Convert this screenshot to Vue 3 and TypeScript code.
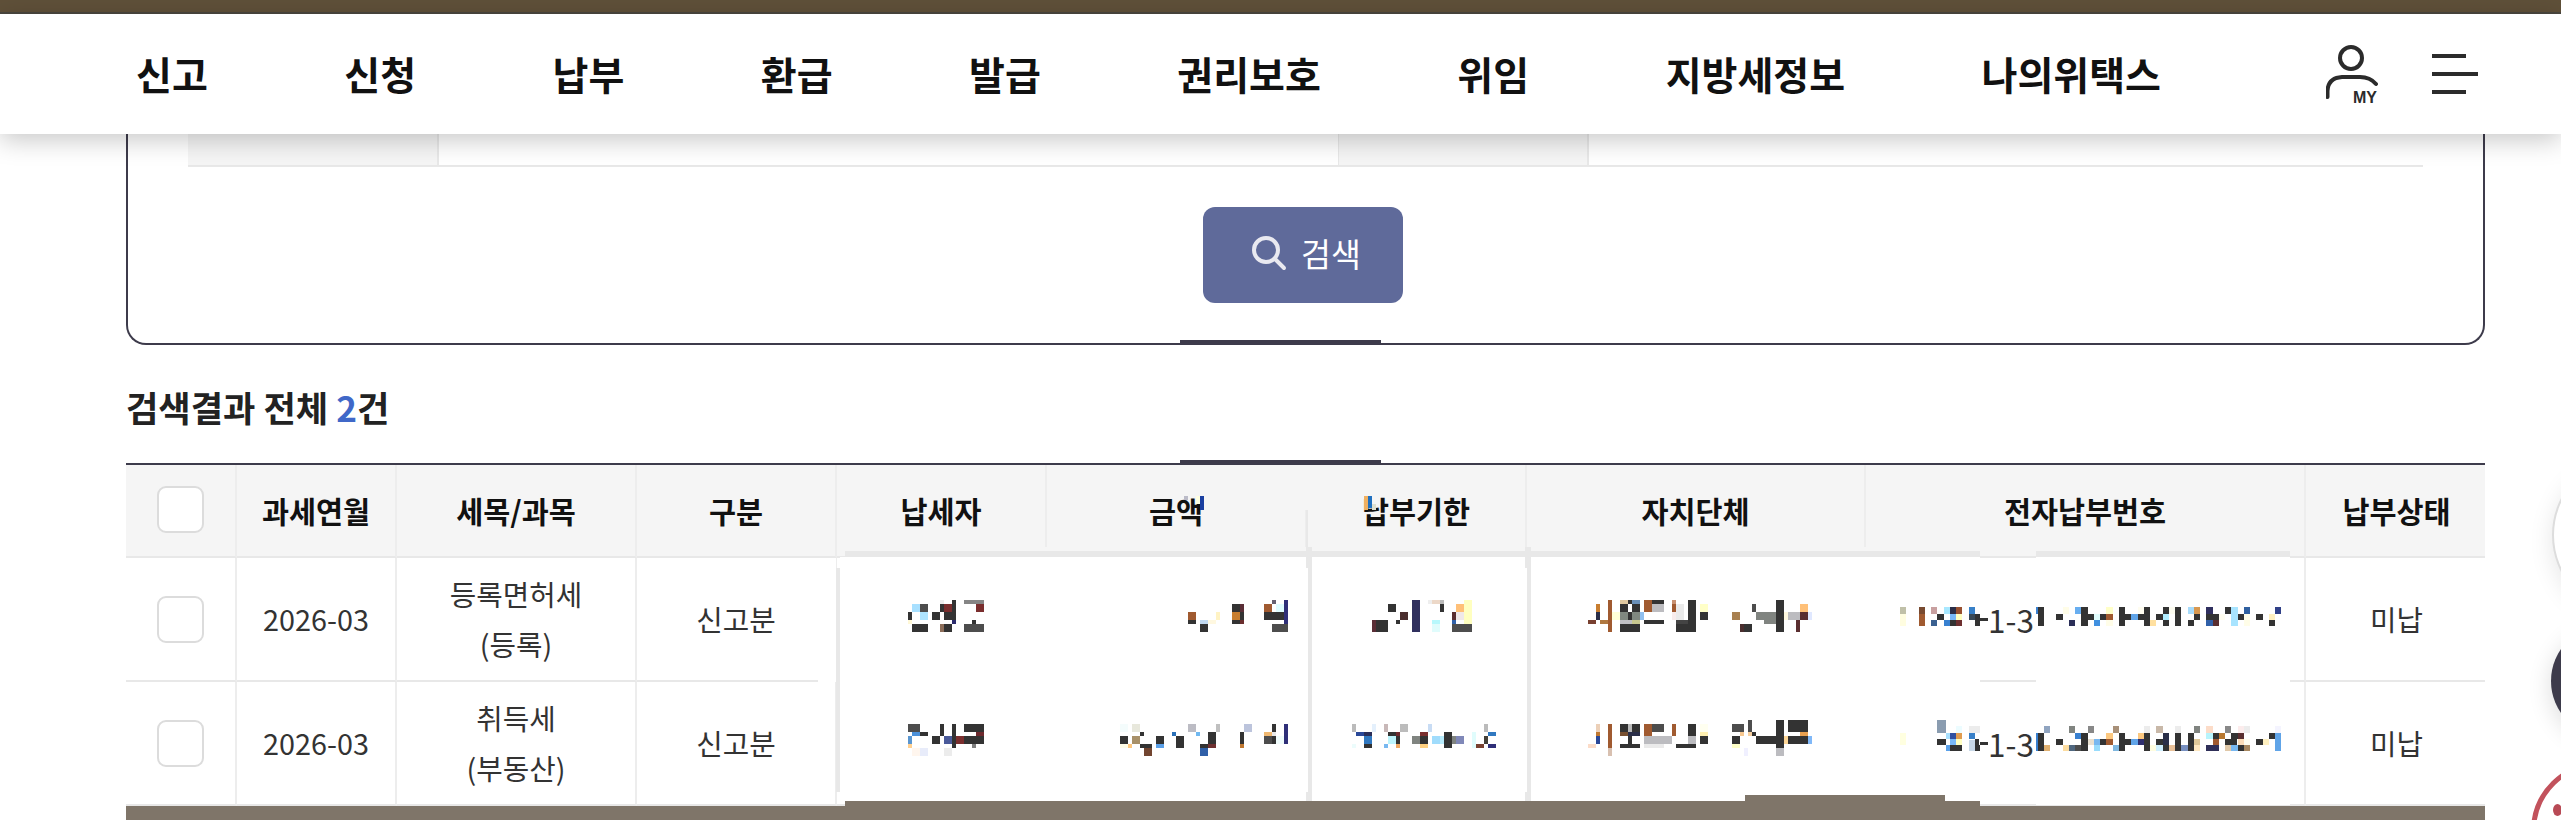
<script setup lang="ts">
interface Cell { text?: string; cls?: string }
interface Mark { x: number; y: number; w: number; h: number; c: string }

const nav: string[] = ['신고', '신청', '납부', '환급', '발급', '권리보호', '위임', '지방세정보', '나의위택스']
const heads: string[] = ['과세연월', '세목/과목', '구분', '납세자', '금액', '납부기한', '자치단체', '전자납부번호', '납부상태']
const rows: Cell[][] = [
  [{ text: '2026-03' }, { text: '등록면허세\n(등록)', cls: 'wrap' }, { text: '신고분' }, {}, {}, {}, {}, { text: '1-3', cls: 'pay-no' }, { text: '미납' }],
  [{ text: '2026-03' }, { text: '취득세\n(부동산)', cls: 'wrap' }, { text: '신고분' }, {}, {}, {}, {}, { text: '1-3', cls: 'pay-no' }, { text: '미납' }],
]

const parse = (s: string): Mark[] =>
  s.split(/[|\n]+/).map((p) => p.trim()).filter(Boolean).map((p) => {
    const [x, y, w, h, c] = p.split(' ')
    return { x: +x, y: +y, w: +w, h: +h, c: '#' + c }
  })

// Page-level leftovers of the capture: patches that lie over the table
const patches: Mark[] = parse(`
1180 340 201 4 3d3b4b|1180 460 201 4 3d3b4b
845 547 1135 4 f5f5f5|2036 547 254 4 f5f5f5|1305 465 3 45 f5f5f5
818 558 18 124 ffffff|840 557 1140 244 ffffff|2036 557 254 248 ffffff
845 551 1135 6 e8e8e8|2036 551 254 6 e8e8e8
836 568 4 224 e8e8e8
1306 510 2 37 e8e8e8|1306 547 6 21 e8e8e8|1308 568 4 224 e8e8e8|1306 792 6 9 e8e8e8
1525 547 6 21 e8e8e8|1527 568 4 224 e8e8e8|1525 792 6 9 e8e8e8
845 801 1135 5 7f7569|1745 795 200 6 7f7569
1184 496 4 4 bbbbc8|1196 496 4 8 ffffe0|1200 496 4 14 1a3fa0
1364 496 4 14 f0b060|1368 496 4 12 2070c0|1372 504 4 6 e0e0d0
`)

const groups: { ox: number; oy: number; marks: Mark[] }[] = [
  { ox: 900, oy: 590, marks: parse(`
36 42 24 24 a8e0ff|60 42 24 24 4d4d4d|24 66 12 24 333333|60 66 24 24 aee4ff|24 90 12 12 fff8d8|36 102 48 24 333333|96 66 24 24 333333|120 30 12 12 eeeeee|120 42 12 24 333333|132 42 24 24 7a2e2e|156 30 12 36 333333|132 66 36 24 333333|156 90 12 12 2d2d6e|120 102 12 24 8d6e5a|132 102 24 24 333333|192 30 60 12 858585|228 42 24 24 7a2e2e|216 90 12 12 333333|192 102 60 24 4d4d4d
|864 66 24 24 a05a30|864 90 24 12 333333|900 90 24 12 c0d8f0|924 90 24 12 fff8e0|948 66 12 24 fff3c4|900 102 24 24 333333|996 42 24 24 333333|1020 42 12 24 5a2e36|996 66 24 24 c87e30|1020 66 12 24 333333|996 90 24 12 333333|1020 90 12 12 6a2e2e|1116 30 12 12 666070|1092 42 24 24 a05a30|1128 42 24 24 dffcff|1152 30 12 72 2f2f78|1092 66 60 24 333333|1116 102 48 24 4d4d4d
|24 402 36 24 4d4d4d|36 426 24 12 4a90d9|60 426 24 12 333333|24 438 12 24 5a96d0|24 462 12 12 ffd090|36 474 24 24 fff6ee|60 474 24 24 e8ecfa|96 438 24 24 333333|120 402 12 36 333333|132 438 24 24 4a5a9a|156 402 12 72 333333|168 438 24 24 7a2e2e|192 402 60 24 333333|228 426 24 12 6e2a2e|192 438 60 24 333333|216 462 12 12 808080|132 474 24 24 ececec
|660 402 24 24 f4fcfc|696 402 24 24 e8e8dc|720 426 12 12 333333|660 438 24 24 333333|696 438 24 24 a89068|660 462 24 12 fffde8|684 462 12 12 ffc880|720 462 36 12 333333|732 474 24 24 724530|768 438 24 24 333333|768 462 24 12 5aa0e8|816 426 12 12 2a70b8|828 438 24 36 333333|864 402 24 24 bcbcc4|888 426 12 12 70b8f0|948 402 12 24 c0c0c0|924 426 24 36 333333|900 462 24 12 333333|924 462 24 12 6e3030|900 474 24 24 3060a8|1020 426 12 36 333333|1020 462 12 12 c07830|1032 402 24 24 bcc4dc|1092 426 24 12 f0b870|1092 438 24 24 4d4d4d|1116 402 12 24 333333|1116 426 12 12 e8e8e8|1116 438 12 24 333333|1152 402 12 60 2f2f78|1128 438 24 24 f0fcfc`) },
  { ox: 1340, oy: 590, marks: parse(`
144 42 24 24 333333|180 66 24 24 4a2e2e|168 90 12 12 333333|96 90 12 36 5a2e36|108 90 36 36 333333|216 30 24 96 30305e|264 30 12 12 eeeeee|276 30 24 12 ecd8c8|300 30 12 12 bbbbbb|300 42 12 24 333333|276 90 24 12 b8f8fc|276 102 24 24 e0fcfc|348 42 24 24 ffc078|372 30 24 72 ffffc0|336 66 12 24 5a2e30|348 66 24 24 f0e8e8|336 90 12 12 3060a8|336 102 60 24 4d4d4d
|768 42 12 24 c87e30|768 66 12 24 2a2e48|744 90 24 12 784030|780 90 24 12 b07840|804 30 12 96 a05a30|840 30 24 12 e0c8a0|864 30 12 12 333333|876 30 24 12 6a90b8|840 42 24 24 333333|876 42 24 24 333333|816 66 24 24 ffffd8|840 66 24 24 808880|864 66 12 24 333333|876 66 24 24 808880|900 66 12 24 90c0f0|840 90 36 12 c0c0c4|876 90 24 12 c8c890|840 102 60 24 333333|912 30 24 36 a05a30|936 30 36 12 333333|936 42 36 24 bcbcc0|912 90 60 12 333333|996 30 12 12 c89070|996 42 12 24 a05a30|996 66 12 24 f8ecec|1008 42 24 48 eaeaea|1044 30 24 72 333333|1008 90 36 12 444444|1008 102 60 24 333333|1080 42 24 24 ffffc8|1080 66 24 24 333333
|1176 66 24 24 a88050|1236 42 12 24 4d4d4d|1248 66 84 24 808480|1272 90 36 12 808480|1308 30 24 60 333333|1308 90 24 36 333333|1200 102 12 24 4a2e2e|1212 102 24 24 333333|1332 66 12 24 fff8e0|1344 66 36 24 bcbcc0|1380 42 24 24 ffc078|1380 66 24 24 5a2e30|1404 66 12 24 e0e8ff|1368 90 12 36 5a2e30
|36 402 12 24 bbbbbb|96 402 12 24 e4f0fc|132 402 12 24 c8b8b8|180 402 24 24 bcbcbc|264 402 12 24 c8dcf4|432 402 12 24 bbbbbb|48 426 24 12 2a4898|72 426 24 12 2a2e58|72 438 24 24 3078c0|72 462 24 12 333333|36 462 12 12 ecfcfc|132 462 12 12 78b8f0|144 426 24 12 333333|168 426 12 12 6e2a2e|144 438 24 24 bcf4fc|168 438 12 24 333333|168 462 12 12 f0a860|216 438 24 24 808480|240 426 24 12 7a2e2e|240 438 24 24 333333|240 462 24 12 ffd080|276 438 24 24 a0dcfc|300 438 12 24 b8ecfc|312 426 24 48 333333|336 438 12 24 808480|348 438 24 24 8088b8|396 426 12 48 e0fcfc|432 438 12 24 444038|408 462 24 12 784030|444 426 24 12 3078c0|444 462 24 12 2f2f78
|768 402 12 24 ecd0b8|768 426 12 12 c07830|768 438 12 24 2a4898|744 462 24 12 fcdcc8|804 402 12 72 a05a30|804 474 12 24 d8c0b0|840 402 24 24 333333|864 402 12 24 bbbbbb|876 402 24 24 333333|840 426 24 12 785030|864 426 36 12 2a2e48|864 438 12 24 333333|840 462 60 12 333333|912 402 24 36 a05a30|936 402 36 24 4d4d4d|912 438 84 24 bcbcc0|912 462 60 12 eaeaea|996 402 12 36 a05a30|1044 402 24 36 333333|1044 438 24 24 bcbcc0|1008 462 60 12 333333|1080 402 24 24 fffff0|1080 426 24 12 fff0b0|1080 438 24 24 333333
|1176 402 36 24 4d4d4d|1224 390 12 36 4d4d4d|1200 426 12 12 f8c890|1224 426 12 12 f8d0a0|1236 426 12 12 333333|1176 438 24 24 333333|1176 462 24 12 ffffc8|1212 474 12 24 f0f0ff|1248 438 60 24 333333|1308 390 24 84 333333|1308 474 24 24 bcbcc0|1332 438 12 24 ffd898|1344 390 60 36 333333|1380 426 24 12 e8a050|1344 438 60 24 333333|1404 438 12 24 80b8f8`) },
  { ox: 1890, oy: 590, marks: parse(`
30 52 18 20 c0c0a8|30 72 18 36 fffde0|87 52 18 20 784a30|87 72 18 36 a05a30|123 52 18 20 c8a0a0|141 72 21 18 333333|123 90 18 18 3a6090|162 52 18 20 a8e8ff|180 52 18 20 2a2e48|198 52 18 20 985030|162 90 18 18 3880d0|180 72 18 18 78b8f8|198 72 18 18 ffffc0|180 90 18 18 333333|198 90 18 18 6e3030|237 52 18 20 3880c8|237 72 18 18 3a4a58|255 72 15 36 333333|270 84 24 8 333333
|438 52 6 20 3880d0|444 52 18 56 333333|498 72 21 18 333333|519 52 18 20 fffde8|537 90 18 18 2a2e58|555 52 18 20 68aef0|573 52 21 56 333333|594 72 18 18 333333|612 72 18 18 e0fcfc|612 90 18 18 4090e0|630 72 18 18 333333|648 52 21 20 ffffc8|648 72 21 18 a05a30|648 90 21 18 fffde8|687 52 18 56 333333|705 72 18 18 333333|723 72 21 18 60a4e8|744 72 18 18 333333|744 52 18 20 fffdf0|762 52 18 56 333333|780 90 18 18 ffe0a0|798 72 21 18 333333|819 52 18 20 333333|819 72 18 18 b0ecff|819 90 18 18 333333|837 52 18 20 fcfcf0|855 52 18 56 333333|894 52 18 20 a8dcfc|912 52 18 20 d89850|912 72 18 18 333333|894 90 18 18 333333|948 52 21 20 2f2f5e|948 72 39 18 333333|948 90 21 18 3060a8|969 90 18 18 5a2e30|987 72 18 18 fffdf0|1005 52 18 20 333333|1023 52 21 56 a8e4ff|1044 72 18 18 333333|1062 52 18 20 3060a0|1062 72 18 36 fffde8|1098 72 21 18 333333|1137 72 18 18 fff0c0|1137 90 18 18 333333|1155 52 18 20 304088
|30 430 18 35 ffffe0|141 390 27 40 8a9cb0|141 447 27 18 333333|168 430 12 18 a8e0ff|180 430 18 18 3050a0|198 430 18 18 e09c50|180 447 18 18 78b8f8|198 447 18 18 ffffc0|168 465 12 18 5aa0e8|180 465 36 18 333333|198 408 18 22 ecfcff|237 408 33 22 ececec|237 430 18 18 3880c8|237 450 18 33 c8d8e8|255 465 15 18 333333|255 447 12 18 333333|270 456 24 8 333333
|438 430 6 53 3880d0|444 430 18 53 333333|462 408 18 22 90a4c0|462 465 18 18 e0b070|498 447 21 18 333333|519 465 18 18 fcdca0|537 408 18 22 808480|537 465 18 18 506880|555 430 18 18 3880d0|555 465 18 18 4d4d4d|573 430 21 53 333333|594 408 18 22 888888|594 447 18 18 e8e0d0|612 447 18 18 78b8f0|612 465 18 18 98dcfc|630 447 18 18 333333|648 430 21 17 fcc880|648 447 21 18 a05a30|669 408 18 22 a89078|669 465 18 18 80b8e0|687 430 18 53 333333|705 447 18 18 333333|723 447 21 18 60a4e8|744 430 18 18 fcc880|744 447 18 18 2f2f70|762 408 18 22 ececec|762 430 18 53 333333|780 465 18 18 fffde0|798 408 21 22 c8b8a8|798 447 21 18 333333|798 465 21 18 d0f0ff|819 430 18 35 2a2e48|819 465 18 18 333333|837 465 18 18 e8c098|855 408 18 22 ececec|855 430 18 53 333333|873 465 21 18 7890c0|894 430 18 53 333333|912 408 18 22 808480|912 447 18 18 e0c898|912 465 18 18 ffe8c0|948 408 21 22 fcdcc8|948 430 21 17 b8f4fc|969 447 18 18 a05a30|948 465 39 18 2f2f58|969 430 18 18 333333|987 430 18 18 b87830|1005 408 18 22 888888|1005 447 36 18 333333|1005 465 18 18 e0c8a8|1023 465 21 18 78b8f0|1023 430 21 17 333333|1044 408 18 22 fcecec|1044 430 18 17 5a2e30|1044 447 18 18 fcdcb8|1044 465 18 18 333333|1062 408 18 22 ececec|1062 447 18 18 fffdf0|1062 465 18 18 a88860|1098 447 21 18 333333|1119 447 18 18 fff0c0|1137 430 18 17 333333|1155 408 18 22 f4f4ff|1155 430 18 53 60a4e8`) },
]
</script>

<template>
  <div class="page">
    <div class="strip"></div>

    <header class="gnb">
      <nav class="menu">
        <a v-for="item in nav" :key="item" class="menu-item">{{ item }}</a>
      </nav>
      <div class="tools">
        <svg class="icon-my" width="56" height="60" viewBox="0 0 56 60">
          <circle cx="25" cy="13" r="11" fill="none" stroke="#2b2b2b" stroke-width="4" />
          <path d="M1.5 52 V46 Q2 33 16 32 H34 Q44 32 50 39" fill="none" stroke="#2b2b2b" stroke-width="4" stroke-linecap="round" />
          <text x="27" y="58" class="my-text">MY</text>
        </svg>
        <div class="burger">
          <span class="bar short"></span>
          <span class="bar"></span>
          <span class="bar short"></span>
        </div>
      </div>
    </header>

    <main class="content">
      <section class="search-box">
        <div class="field-row">
          <div class="label"></div>
          <div class="value"></div>
          <div class="label"></div>
          <div class="value"></div>
        </div>
        <button class="search-btn" type="button">
          <svg width="40" height="40" viewBox="0 0 40 40">
            <circle cx="17" cy="16" r="12" fill="none" stroke="#e9e9f0" stroke-width="4" />
            <path d="M26 25 L35 34" stroke="#e9e9f0" stroke-width="4" stroke-linecap="round" />
          </svg>
          <span>검색</span>
        </button>
      </section>

      <h2 class="result-title">검색결과 전체 <em>2</em>건</h2>

      <div class="grid">
        <div class="th"><span class="check"></span></div>
        <div v-for="h in heads" :key="h" class="th">{{ h }}</div>
        <template v-for="(row, r) in rows" :key="r">
          <div class="td"><span class="check"></span></div>
          <div v-for="(cell, c) in row" :key="c" class="td" :class="cell.cls">{{ cell.text }}</div>
        </template>
      </div>
      <div class="band"></div>
    </main>

    <svg class="overlay" width="2561" height="820" viewBox="0 0 2561 820" shape-rendering="crispEdges">
      <rect v-for="(m, i) in patches" :key="i" :x="m.x" :y="m.y" :width="m.w" :height="m.h" :fill="m.c" />
      <g v-for="g in groups" :key="g.ox" :transform="`translate(${g.ox} ${g.oy}) scale(0.33333)`">
        <rect v-for="(m, i) in g.marks" :key="i" :x="m.x" :y="m.y" :width="m.w" :height="m.h" :fill="m.c" />
      </g>
    </svg>

    <div class="float float-white"></div>
    <div class="float float-dark"></div>
    <div class="float float-red"></div>
    <div class="float red-dot"></div>
  </div>
</template>

<style>
html, body {
  margin: 0;
  background: #fff;
  overflow: hidden;
}
</style>

<style scoped>
.page {
  position: relative;
  width: 2561px;
  height: 820px;
  overflow: hidden;
  background: #fff;
  font-family: "Noto Sans CJK KR", "Noto Sans", sans-serif;
  color: #333;
}
.strip {
  height: 12px;
  background: #5f5039;
  border-bottom: 2px solid #4a473f;
}
.gnb {
  position: relative;
  z-index: 5;
  height: 120px;
  display: flex;
  align-items: center;
  justify-content: space-between;
  background: #fff;
  box-shadow: 0 6px 24px rgba(0, 0, 0, 0.22);
  padding: 0 83px 0 136px;
}
.menu {
  display: flex;
  gap: 136.5px;
  margin-top: -3px;
}
.menu-item {
  font-size: 39px;
  font-weight: 700;
  line-height: 60px;
  color: #111;
  white-space: nowrap;
}
.tools {
  display: flex;
  align-items: flex-start;
  gap: 50px;
}
.icon-my {
  margin-top: 1px;
}
.my-text {
  font-family: "Liberation Sans", sans-serif;
  font-size: 16px;
  font-weight: 700;
  fill: #2b2b2b;
}
.burger {
  display: flex;
  flex-direction: column;
  gap: 14px;
  width: 46px;
  margin-top: 10px;
}
.bar {
  display: block;
  height: 4px;
  width: 46px;
  background: #2b2b2b;
}
.bar.short {
  width: 34px;
}
.content {
  margin: -30px 76px 0 126px;
}
.search-box {
  position: relative;
  border: 2px solid #3d3b4b;
  border-width: 0 2px 2px 2px;
  border-radius: 0 0 20px 20px;
  padding: 0 60px;
  height: 239px;
}
.field-row {
  display: grid;
  grid-template-columns: 251px 899px 251px 834px;
  height: 61px;
  border-bottom: 2px solid #e8e8e8;
}
.label {
  background: #f5f5f5;
  border-left: 1px solid #e8e8e8;
  border-right: 2px solid #e8e8e8;
}
.label:first-child {
  border-left: 0;
}
.search-btn {
  display: flex;
  align-items: center;
  justify-content: center;
  gap: 12px;
  width: 200px;
  height: 96px;
  margin: 40px 0 0 1015px;
  padding: 0 0 3px 4px;
  border: 0;
  border-radius: 12px;
  background: #5f6a9a;
  color: #fff;
  font: 400 32.5px/1 "Noto Sans CJK KR", sans-serif;
}
.result-title {
  margin: 37px 0 31px;
  font-size: 35.2px;
  line-height: 50px;
  font-weight: 700;
  color: #222;
}
.result-title em {
  font-style: normal;
  color: #4068c8;
}
.grid {
  display: grid;
  grid-template-columns: 111px 160px 240px 200px 210px 260px 220px 339px 440px 179px;
  grid-template-rows: 93px 124px 124px;
  border-top: 2px solid #3d3b4b;
}
.th,
.td {
  display: flex;
  align-items: center;
  justify-content: center;
  box-sizing: border-box;
  border-right: 2px solid #ededed;
  border-bottom: 2px solid #e8e8e8;
  white-space: pre-line;
  text-align: center;
}
.th:nth-child(10n),
.td:nth-child(10n) {
  border-right: 0;
  padding-left: 2px;
}
.th {
  background: #f5f5f5;
  font-size: 29.4px;
  font-weight: 700;
  color: #111;
  padding-bottom: 2px;
}
.td {
  font-size: 28.8px;
  color: #333;
  line-height: 50px;
}
.pay-no {
  padding-right: 148px;
  font-size: 31.5px;
}
.check {
  display: block;
  box-sizing: border-box;
  width: 47px;
  height: 47px;
  background: #fff;
  border: 2px solid #dcdcdc;
  border-radius: 9px;
}
.band {
  height: 20px;
  background: #7f7569;
}
.overlay {
  position: absolute;
  left: 0;
  top: 0;
  pointer-events: none;
}
.float {
  position: absolute;
  border-radius: 50%;
  box-sizing: border-box;
}
.float-white {
  left: 2552px;
  top: 455px;
  width: 160px;
  height: 160px;
  background: #fff;
  border: 2px solid #ddd;
  box-shadow: 0 6px 24px rgba(0, 0, 0, 0.1);
}
.float-dark {
  left: 2551px;
  top: 625px;
  width: 112px;
  height: 112px;
  background: #3d3b4b;
  box-shadow: 0 6px 24px rgba(0, 0, 0, 0.14);
}
.float-red {
  left: 2531px;
  top: 761px;
  width: 140px;
  height: 140px;
  background: #fff;
  border: 5px solid #c2525c;
}
.red-dot {
  left: 2553px;
  top: 804px;
  width: 9px;
  height: 12px;
  background: #b84a55;
}
</style>
